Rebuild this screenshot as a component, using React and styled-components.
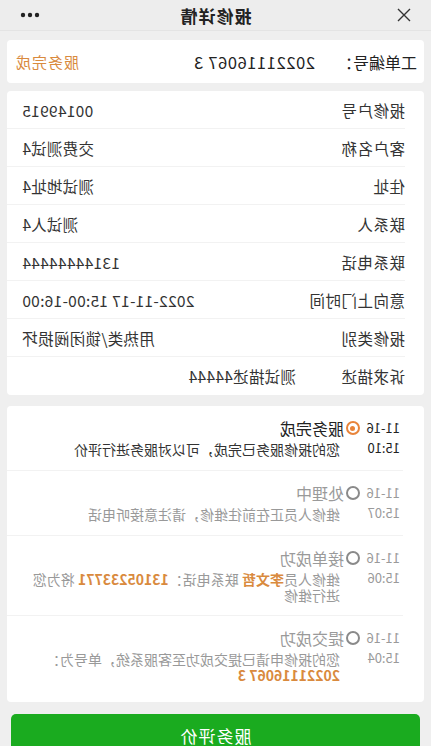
import React from "react";
import styled, { createGlobalStyle } from "styled-components";

const Global = createGlobalStyle`
  html, body { margin: 0; padding: 0; background: #efefef; }
  body { font-family: "Noto Sans CJK SC", "Noto Sans", sans-serif; color: #333; }
  * { box-sizing: border-box; }
`;

const Page = styled.div`
  width: 431px;
  height: 746px;
  overflow: hidden;
  background: #efefef;
  transform: scaleX(-1);
  display: flex;
  flex-direction: column;
`;

const Header = styled.div`
  flex: none;
  height: 31px;
  display: grid;
  grid-template-columns: 60px 1fr 60px;
  align-items: center;
  background: #ededed;
  border-bottom: 1px solid #e4e4e4;
`;

const Title = styled.div`
  text-align: center;
  font-size: 17px;
  font-weight: 700;
  color: #222;
  letter-spacing: 1px;
`;

const IconBox = styled.div`
  display: flex;
  justify-content: ${(p) => p.$align};
  padding: 0 ${(p) => p.$pad}px;
  align-items: center;
`;

const Content = styled.div`
  padding: 9px 7px 0;
  display: flex;
  flex-direction: column;
  gap: 8px;
`;

const Card = styled.div`
  background: #fff;
  border-radius: 4px;
`;

const OrderCard = styled(Card)`
  height: 43px;
  display: flex;
  align-items: center;
  padding: 0 8px 0 7px;
  font-size: 16px;
  color: #222;
`;

const OrderNo = styled.span`
  margin-left: 22px;
  font-size: 16.5px;
  letter-spacing: 0.6px;
`;

const Status = styled.span`
  margin-left: auto;
  color: #d98a3e;
  font-size: 15px;
  letter-spacing: 1px;
`;

const Row = styled.div`
  height: 38px;
  display: flex;
  align-items: center;
  margin-left: 19px;
  padding-right: 15px;
  font-size: 15.5px;
  color: #333;
  border-bottom: ${(p) => (p.$last ? "none" : "1px solid #f2f2f2")};
`;

const Label = styled.span`
  flex: none;
  letter-spacing: 0.5px;
`;

const Value = styled.span`
  margin-left: ${(p) => (p.$left ? "45px" : "auto")};
  letter-spacing: 0.3px;
  color: #333;
`;

const Timeline = styled(Card)`
  margin-top: 3px;
  padding-bottom: 7px;
`;

const Item = styled.div`
  margin-left: 21px;
  padding: 12px 18px 12px 3px;
  display: grid;
  grid-template-columns: 40px 16px minmax(0, 1fr);
  border-bottom: ${(p) => (p.$last ? "none" : "1px solid #f2f2f2")};
  color: ${(p) => (p.$active ? "#222" : "#9a9a9a")};
`;

const Time = styled.span`
  font-size: 13px;
  line-height: 20px;
  white-space: nowrap;
  align-self: start;
`;

const Dot = styled.span`
  align-self: center;
  width: 14px;
  height: 14px;
  border-radius: 50%;
  border: 2px solid ${(p) => (p.$active ? "#e8843a" : "#8a8a8a")};
  display: flex;
  align-items: center;
  justify-content: center;
  &::after {
    content: "";
    width: 5px;
    height: 5px;
    border-radius: 50%;
    background: ${(p) => (p.$active ? "#e8843a" : "transparent")};
  }
`;

const ItemTitle = styled.span`
  font-size: 16px;
  line-height: 20px;
`;

const Desc = styled.span`
  grid-column: 2 / 4;
  margin-left: 20px;
  padding-top: 3px;
  font-size: 14px;
  line-height: 16px;
  color: ${(p) => (p.$active ? "#333" : "#999")};
`;

const Hl = styled.b`
  color: #d98a3e;
  font-weight: 700;
`;

const Button = styled.button`
  margin: 4px 4px 0;
  height: 42px;
  flex: none;
  border: none;
  border-radius: 5px;
  background: #1aab1f;
  color: #fff;
  font-family: inherit;
  font-size: 17px;
  letter-spacing: 1px;
`;

const info = [
  ["报修户号", "00149915"],
  ["客户名称", "交费测试4"],
  ["住址", "测试地址4"],
  ["联系人", "测试人4"],
  ["联系电话", "13144444444"],
  ["意向上门时间", "2022-11-17 15:00-16:00"],
  ["报修类别", "用热类/锁闭阀损坏"],
  ["诉求描述", "测试描述44444", true],
];

export default function App() {
  return (
    <>
      <Global />
      <Page>
        <Header>
          <IconBox $align="flex-start" $pad={19}>
            <svg width="16" height="16" viewBox="0 0 16 16">
              <path d="M2 2L14 14M14 2L2 14" stroke="#333" strokeWidth="1.4" />
            </svg>
          </IconBox>
          <Title>报修详情</Title>
          <IconBox $align="flex-end" $pad={20}>
            <svg width="20" height="6" viewBox="0 0 20 6">
              <circle cx="3" cy="3" r="2.2" fill="#222" />
              <circle cx="10" cy="3" r="2.2" fill="#222" />
              <circle cx="17" cy="3" r="2.2" fill="#222" />
            </svg>
          </IconBox>
        </Header>
        <Content>
          <OrderCard>
            <span>工单编号：</span>
            <OrderNo>20221116067 3</OrderNo>
            <Status>服务完成</Status>
          </OrderCard>
          <Card>
            {info.map(([l, v, left], i) => (
              <Row key={l} $last={i === info.length - 1}>
                <Label>{l}</Label>
                <Value $left={left}>{v}</Value>
              </Row>
            ))}
          </Card>
          <Timeline>
            <Item $active>
              <Time>11-16</Time>
              <Dot $active />
              <ItemTitle>服务完成</ItemTitle>
              <Time>15:10</Time>
              <Desc $active>您的报修服务已完成，可以对服务进行评价</Desc>
            </Item>
            <Item>
              <Time>11-16</Time>
              <Dot />
              <ItemTitle>处理中</ItemTitle>
              <Time>15:07</Time>
              <Desc>维修人员正在前往维修，请注意接听电话</Desc>
            </Item>
            <Item>
              <Time>11-16</Time>
              <Dot />
              <ItemTitle>接单成功</ItemTitle>
              <Time>15:06</Time>
              <Desc>
                维修人员<Hl>李文哲</Hl> 联系电话：<Hl>13105233771</Hl> 将为您进行维修
              </Desc>
            </Item>
            <Item $last>
              <Time>11-16</Time>
              <Dot />
              <ItemTitle>提交成功</ItemTitle>
              <Time>15:04</Time>
              <Desc>
                您的报修申请已提交成功至客服系统，单号为：<Hl>20221116067 3</Hl>
              </Desc>
            </Item>
          </Timeline>
          <Button>服务评价</Button>
        </Content>
      </Page>
    </>
  );
}
